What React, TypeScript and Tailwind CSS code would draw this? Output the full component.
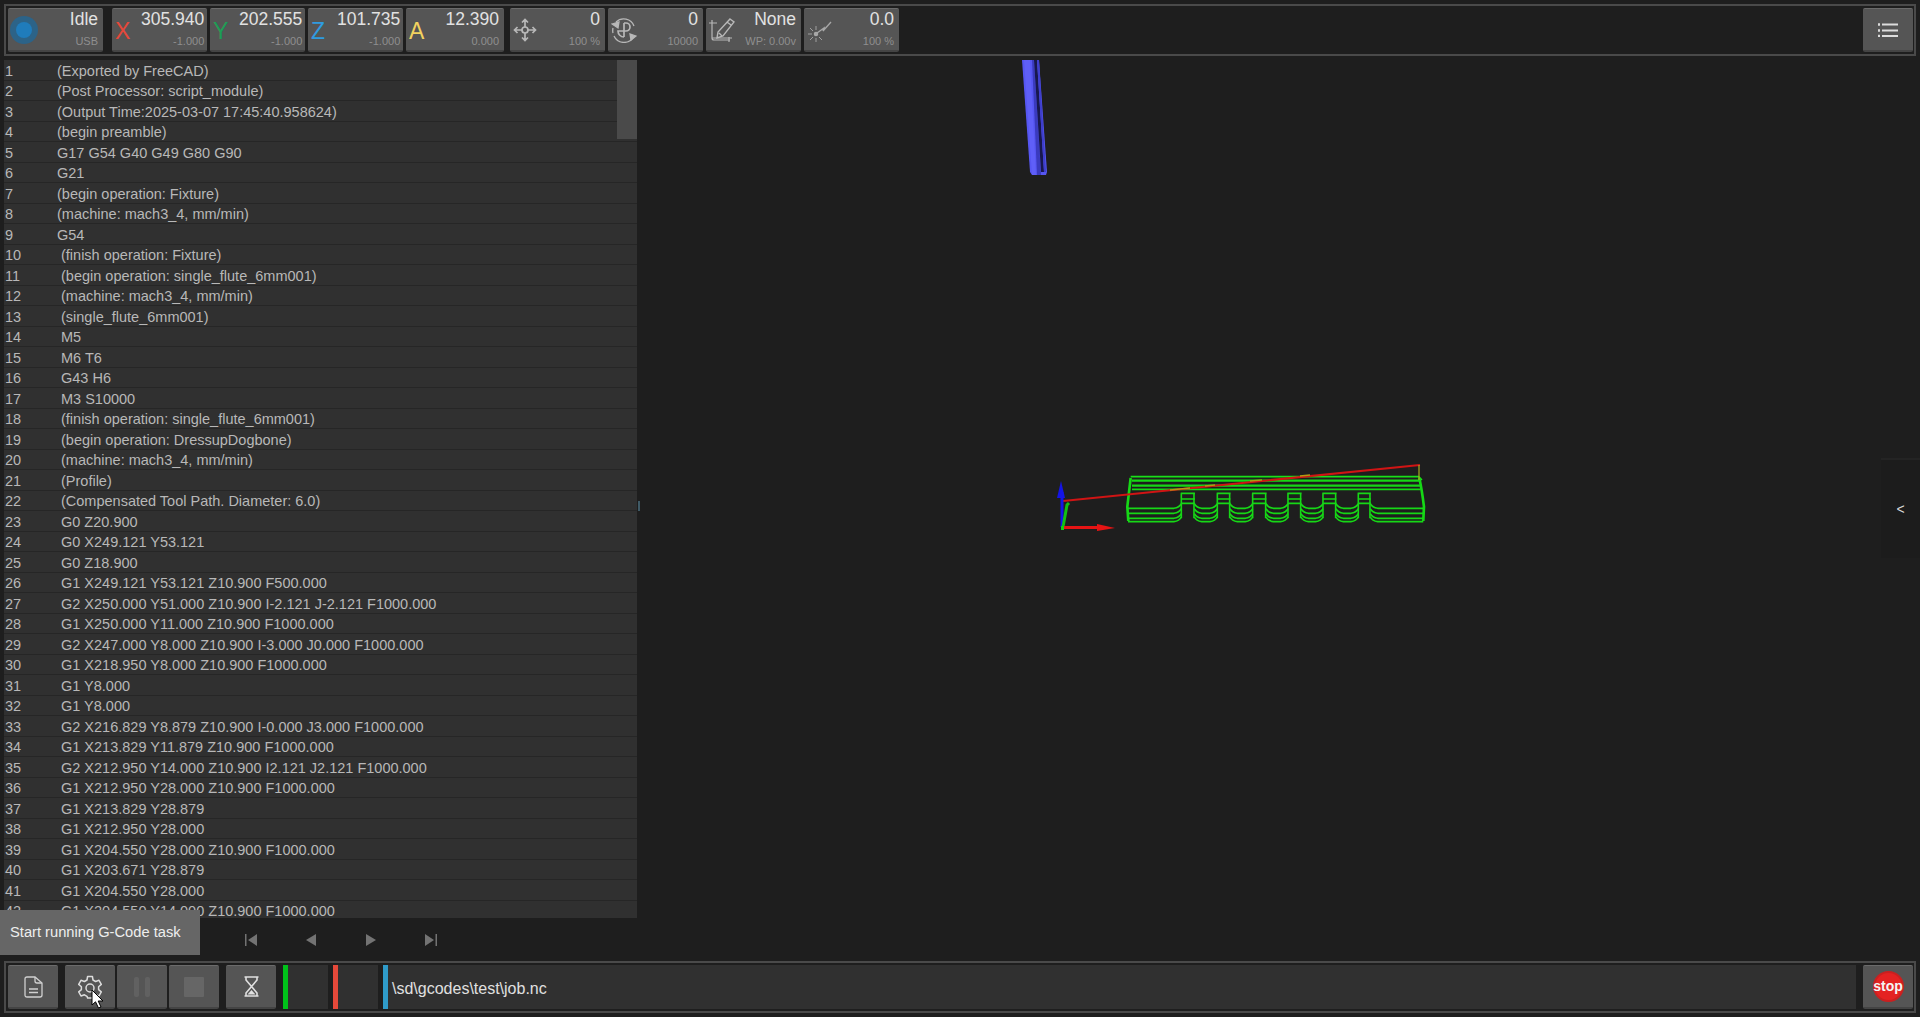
import { ReactNode } from 'react';

const gcode = [
  '(Exported by FreeCAD)',
  '(Post Processor: script_module)',
  '(Output Time:2025-03-07 17:45:40.958624)',
  '(begin preamble)',
  'G17 G54 G40 G49 G80 G90',
  'G21',
  '(begin operation: Fixture)',
  '(machine: mach3_4, mm/min)',
  'G54',
  '(finish operation: Fixture)',
  '(begin operation: single_flute_6mm001)',
  '(machine: mach3_4, mm/min)',
  '(single_flute_6mm001)',
  'M5',
  'M6 T6',
  'G43 H6',
  'M3 S10000',
  '(finish operation: single_flute_6mm001)',
  '(begin operation: DressupDogbone)',
  '(machine: mach3_4, mm/min)',
  '(Profile)',
  '(Compensated Tool Path. Diameter: 6.0)',
  'G0 Z20.900',
  'G0 X249.121 Y53.121',
  'G0 Z18.900',
  'G1 X249.121 Y53.121 Z10.900 F500.000',
  'G2 X250.000 Y51.000 Z10.900 I-2.121 J-2.121 F1000.000',
  'G1 X250.000 Y11.000 Z10.900 F1000.000',
  'G2 X247.000 Y8.000 Z10.900 I-3.000 J0.000 F1000.000',
  'G1 X218.950 Y8.000 Z10.900 F1000.000',
  'G1 Y8.000',
  'G1 Y8.000',
  'G2 X216.829 Y8.879 Z10.900 I-0.000 J3.000 F1000.000',
  'G1 X213.829 Y11.879 Z10.900 F1000.000',
  'G2 X212.950 Y14.000 Z10.900 I2.121 J2.121 F1000.000',
  'G1 X212.950 Y28.000 Z10.900 F1000.000',
  'G1 X213.829 Y28.879',
  'G1 X212.950 Y28.000',
  'G1 X204.550 Y28.000 Z10.900 F1000.000',
  'G1 X203.671 Y28.879',
  'G1 X204.550 Y28.000',
  'G1 X204.550 Y14.000 Z10.900 F1000.000',
];

function Card({ icon, value, sub, w = 'w-[95px]' }: { icon: ReactNode; value: string; sub: string; w?: string }) {
  return (
    <div className={`${w} h-[44px] shrink-0 rounded-[2px] bg-[#555555] border-t border-t-[#6b6b6b] border-b-2 border-b-[#444444] flex items-center pl-[3px] pr-[5px]`}>
      <div className="w-[26px] h-[30px] flex items-center justify-start shrink-0">{icon}</div>
      <div className="flex-1 flex flex-col items-end self-stretch justify-between pb-[2px]">
        <span className="text-[17.5px] leading-[20px] text-[#e2e2e2]">{value}</span>
        <span className="text-[11px] leading-[13px] text-[#8f8f8f]">{sub}</span>
      </div>
    </div>
  );
}

function AxisLetter({ children, color }: { children: string; color: string }) {
  return <span className={`text-[23px] leading-none mt-[4px] ${color}`}>{children}</span>;
}

function ToolButton({ children, className = '' }: { children: ReactNode; className?: string }) {
  return (
    <div className={`w-[50px] h-[44px] shrink-0 rounded-[2px] bg-[#555555] border-t border-t-[#6b6b6b] border-b-2 border-b-[#444444] flex items-center justify-center ${className}`}>
      {children}
    </div>
  );
}

function Indicator({ color, className }: { color: string; className: string }) {
  return (
    <div className={`h-[44px] bg-[#303030] flex shrink-0 ${className}`}>
      <div className={`w-[5px] h-full ${color}`} />
    </div>
  );
}

// dogbone profile, coordinates are from the 3x crop of the view
function ToolPath() {
  const notches = [[422, 465], [530, 572], [636, 680], [742, 785], [847, 890], [953, 993]];
  const levels = [175, 190, 205, 215];
  const bottom = (y: number) => {
    let p = `M264 ${y} H402 Q418 ${y - 2} 424 ${y - 14}`;
    notches.forEach(([, b], i) => {
      const next = notches[i + 1];
      p += ` M${b - 2} ${y - 14} Q${b + 4} ${y - 2} ${b + 20} ${y}`;
      if (next) p += ` H${next[0] - 20} Q${next[0] - 4} ${y - 2} ${next[0] + 2} ${y - 14}`;
      else p += ` H1150`;
    });
    return p;
  };
  return (
    <g transform="translate(1040 450) scale(0.3333)" fill="none" stroke="#16d816" strokeWidth="4.8">
      <path d="M272 80 H1136 L1146 90" stroke="#19e019" />
      <path d="M276 92 H1138 M276 107 H1140" strokeWidth="6.5" />
      <path d="M276 118 H1142" />
      <path d="M272 84 Q268 120 262 170 L265 213" strokeWidth="8" />
      <path d="M1138 84 Q1146 120 1152 170 L1150 213" strokeWidth="8" />
      {levels.map((y) => <path key={y} d={bottom(y)} />)}
      {notches.map(([a, b]) => (
        <path key={a} d={`M${a} 130 H${b} M${a} 147 H${b} M${a} 160 H${b} M${a + 2} 130 V205 M${b - 3} 130 V205`} />
      ))}
    </g>
  );
}

function View3D() {
  return (
    <svg className="absolute inset-0 w-full h-full" viewBox="640 60 1280 897">
      {/* tool */}
      <path d="M1022 60 H1039 L1047 172 L1046 175 H1032 L1030 172 Z" fill="#5656f2" />
      <path d="M1024 60 H1030 L1036 175 H1032 Z" fill="#5f5ff8" />
      <path d="M1032 60 H1034 L1041 175 H1037 Z" fill="#3a3abe" />
      <path d="M1034 60 H1037 L1044 172 H1041 Z" fill="#18184e" />
      <path d="M1037 60 H1039 L1046 172 H1044 Z" fill="#3e3ecc" />
      <ToolPath />
      {/* rapid moves */}
      <path d="M1063 501 L1420 465" stroke="#d01414" strokeWidth="2" fill="none" />
      <path d="M1170 490 L1190 488 M1205 486 L1215 485 M1250 481 L1262 480 M1300 476 L1310 475" stroke="#b09a14" strokeWidth="1.6" fill="none" />
      <path d="M1419 465 V480" stroke="#a8b020" strokeWidth="1.2" fill="none" />
      {/* axis marker */}
      <path d="M1062 492 V527" stroke="#1414e6" strokeWidth="3" />
      <path d="M1061 481 L1057 498 H1065 Z" fill="#1414e6" />
      <path d="M1063 527 L1067 505 L1069 503" stroke="#12c012" strokeWidth="3" fill="none" />
      <path d="M1064 527.5 H1098" stroke="#e61414" strokeWidth="3" />
      <path d="M1097 524 L1115 528 L1097 531 Z" fill="#e61414" />
      <rect x="1061" y="526" width="3" height="4" fill="#14d014" />
    </svg>
  );
}

export default function App() {
  return (
    <div className="relative w-[1920px] h-[1017px] overflow-hidden bg-[#1e1e1e] font-['Liberation_Sans',sans-serif] text-[#c4c4c4] flex flex-col">
      {/* top status bar */}
      <div className="h-[60px] shrink-0 pt-[4px] pl-[4px] pr-[4px]">
        <div className="h-[52px] border-2 border-[#4a4a4a] pl-[2px] pr-[1px] pt-[2px] flex gap-[3px]">
          <Card
            w="w-[95px] mr-[6px]"
            value="Idle"
            sub="USB"
            icon={
              <svg className="-ml-[2px] shrink-0" width="30" height="30" viewBox="0 0 30 30">
                <circle cx="15" cy="15" r="14" fill="#2c6388" />
                <circle cx="15" cy="15" r="8" fill="#1f7cbc" />
              </svg>
            }
          />
          <Card value="305.940" sub="-1.000" icon={<AxisLetter color="text-[#e5483a]">X</AxisLetter>} />
          <Card value="202.555" sub="-1.000" icon={<AxisLetter color="text-[#1f9d55]">Y</AxisLetter>} />
          <Card value="101.735" sub="-1.000" icon={<AxisLetter color="text-[#2f9be0]">Z</AxisLetter>} />
          <Card w="w-[98px] mr-[3px]" value="12.390" sub="0.000" icon={<AxisLetter color="text-[#f2d25f]">A</AxisLetter>} />
          <Card
            value="0"
            sub="100 %"
            icon={
              <svg width="24" height="24" viewBox="0 0 24 24" fill="none" stroke="#b8b8b8" strokeWidth="1.7">
                <circle cx="12" cy="12" r="3" />
                <path d="M12 9 V1.5 M9 4.5 L12 1.5 L15 4.5 M12 15 V22.5 M9 19.5 L12 22.5 L15 19.5 M9 12 H1.5 M4.5 9 L1.5 12 L4.5 15 M15 12 H22.5 M19.5 9 L22.5 12 L19.5 15" />
              </svg>
            }
          />
          <Card
            value="0"
            sub="10000"
            icon={
              <svg width="26" height="26" viewBox="0 0 26 26" fill="none" stroke="#b8b8b8" strokeWidth="1.3">
                <path d="M5 5 A11 11 0 0 1 23 9 M23 19 A11 11 0 0 1 3 19 M2 11 A11 11 0 0 0 2 16" />
                <path d="M1 7 L8 5 L7 11 Z M25 19 L19 17 L20 23 Z" fill="#b8b8b8" />
                <path d="M13 6 V20 M13 6 H15 A4 4 0 0 1 15 14 H7 A6 6 0 0 0 13 20" strokeWidth="1.7" />
              </svg>
            }
          />
          <Card
            value="None"
            sub="WP: 0.00v"
            icon={
              <svg width="26" height="26" viewBox="0 0 26 26" fill="none" stroke="#b8b8b8" strokeWidth="1.2">
                <path d="M0 6 H8 M3 3 V21 Q3 23 5 23 H21 M3 21 H23 M20 20 V25" />
                <path d="M21 2 L25 5 L14 19 L8 21 L9 15 Z M18 5 L22 8 M10 16 L13 19" strokeWidth="1.4" />
              </svg>
            }
          />
          <Card
            value="0.0"
            sub="100 %"
            icon={
              <svg width="26" height="26" viewBox="0 0 26 26" fill="none" stroke="#a8a8a8" strokeWidth="1.3">
                <path d="M10 16 L17 11 L16 14 L24 5" />
                <circle cx="9" cy="17" r="1.6" fill="#a8a8a8" />
                <path d="M1 17 H5 M9 21 V25 M9 9 V13 M3 11 L6 14 M3 23 L6 20 M12 20 L15 23" strokeWidth="0.9" />
              </svg>
            }
          />
          <div className="flex-1" />
          <ToolButton>
            <svg width="20" height="14" viewBox="0 0 20 14" fill="none" stroke="#dcdcdc">
              <path d="M4 1.5 H20 M4 7.5 H20 M4 13 H20" strokeWidth="2" />
              <path d="M0 1.5 H2 M0 7.5 H2 M0 13 H2" strokeWidth="2.4" />
            </svg>
          </ToolButton>
        </div>
      </div>

      {/* code list and 3d view */}
      <div className="flex-1 min-h-0 flex">
        <div className="w-[640px] shrink-0 flex flex-col">
          <div className="relative flex-1 min-h-0 overflow-hidden ml-[4px] mr-[3px] bg-[#303030]">
            {gcode.map((line, i) => (
              <div key={i} className="h-[20.5px] flex items-center pt-[3.5px] border-b border-[#262626] text-[14.5px] text-[#b8b8b8]">
                <span className={i < 9 ? 'w-[53px] pl-[1px] shrink-0' : 'w-[57px] pl-[1px] shrink-0'}>{i + 1}</span>
                <span className="whitespace-nowrap">{line}</span>
              </div>
            ))}
            <div className="absolute right-0 top-0 w-[20px] h-[79px] bg-[#4a4a4a]" />
          </div>
          <div className="h-[39px] shrink-0 flex items-center pt-[4px] text-[#737373] pl-[245px] gap-[48px]">
            <svg width="12" height="12" viewBox="0 0 12 12" fill="currentColor"><path d="M0 0 H1.5 V12 H0 Z M12 0 V12 L3 6 Z" /></svg>
            <svg width="12" height="12" viewBox="0 0 12 12" fill="currentColor"><path d="M11 0 V12 L1 6 Z" /></svg>
            <svg width="12" height="12" viewBox="0 0 12 12" fill="currentColor"><path d="M1 0 V12 L11 6 Z" /></svg>
            <svg width="12" height="12" viewBox="0 0 12 12" fill="currentColor"><path d="M12 0 H10.5 V12 H12 Z M0 0 V12 L9 6 Z" /></svg>
          </div>
        </div>
        <div className="relative flex-1 min-w-0">
          <div className="absolute left-[-2px] top-[441px] w-[2px] h-[10px] bg-[#3f5a66]" />
          <View3D />
          <div className="absolute right-0 top-[398px] w-[39px] h-[100px] bg-[#1c1c1c] border-t-2 border-[#242424] flex items-center justify-center text-[14px] text-[#d8d8d8]">
            &lt;
          </div>
        </div>
      </div>

      {/* bottom bar */}
      <div className="h-[60px] shrink-0 pt-[4px] pl-[4px] pr-[4px]">
        <div className="h-[52px] border-2 border-[#4a4a4a] pl-[2px] pr-[1px] pt-[2px] flex">
          <ToolButton className="mr-[7px]">
            <svg width="19" height="22" viewBox="0 0 19 22" fill="none" stroke="#d0d0d0" strokeWidth="1.3">
              <path d="M3 1 H11 L18 7 V19 Q18 21 16 21 H3 Q1 21 1 19 V3 Q1 1 3 1 Z" />
              <path d="M11 1 V5 Q11 7 13 7 H18 M5 13 H14 M5 16.5 H14" />
            </svg>
          </ToolButton>
          <ToolButton className="mr-[2px]">
            <svg width="24" height="24" viewBox="0 0 24 24" fill="none" stroke="#dcdcdc" strokeWidth="1.5" strokeLinejoin="round">
              <path d="M9.6 1.5 H14.4 L15 5 L17.6 6.5 L21 5.3 L23.3 9.4 L20.6 11.7 V14.6 L23.3 16.9 L21 21 L17.6 19.8 L15 21.3 L14.4 23 H9.6 L9 21.3 L6.4 19.8 L3 21 L0.7 16.9 L3.4 14.6 V11.7 L0.7 9.4 L3 5.3 L6.4 6.5 L9 5 Z" />
              <circle cx="12" cy="13" r="4" />
            </svg>
          </ToolButton>
          <ToolButton className="mr-[2px]">
            <div className="flex gap-[6px]">
              <div className="w-[5px] h-[20px] rounded-[2px] bg-[#616161]" />
              <div className="w-[5px] h-[20px] rounded-[2px] bg-[#616161]" />
            </div>
          </ToolButton>
          <ToolButton className="mr-[7px]">
            <div className="w-[20px] h-[20px] rounded-[1px] bg-[#666666]" />
          </ToolButton>
          <ToolButton className="mr-[7px]">
            <svg width="15" height="21" viewBox="0 0 15 21" fill="none" stroke="#e0e0e0" strokeWidth="1.6">
              <path d="M0.5 1 H14.5 M0.5 20 H14.5 M2 1 V4 L13 17 V20 M13 1 V4 L2 17 V20" />
              <path d="M3.5 18.5 L7.5 14 L11.5 18.5 Z" fill="#e0e0e0" stroke="none" />
            </svg>
          </ToolButton>
          <Indicator color="bg-[#00c21a]" className="w-[45px] mr-[5px]" />
          <Indicator color="bg-[#e5493a]" className="w-[45px] mr-[5px]" />
          <div className="flex-1 h-[44px] bg-[#303030] flex items-center mr-[7px]">
            <div className="w-[5px] h-full bg-[#2f9bc9] shrink-0" />
            <span className="pl-[4px] pt-[4px] text-[16px] text-[#e0e0e0]">\sd\gcodes\test\job.nc</span>
          </div>
          <ToolButton>
            <div className="w-[31px] h-[31px] rounded-full bg-[#e42222] border-2 border-[#c92020] flex items-center justify-center text-[14px] font-bold text-[#f4f4f4]">
              stop
            </div>
          </ToolButton>
        </div>
      </div>

      {/* tooltip */}
      <div className="absolute left-0 top-[910px] w-[200px] h-[45px] bg-[#666666] flex items-center pl-[10px] text-[14.7px] text-[#eeeeee]">
        Start running G-Code task
      </div>

      {/* mouse cursor */}
      <svg className="absolute left-[91px] top-[989px]" width="13" height="20" viewBox="0 0 13 20">
        <path d="M1 1 V16 L4.5 12.8 L7.5 19 L10 18 L7.2 12 H12 Z" fill="#ffffff" stroke="#000000" strokeWidth="1" />
      </svg>
    </div>
  );
}
